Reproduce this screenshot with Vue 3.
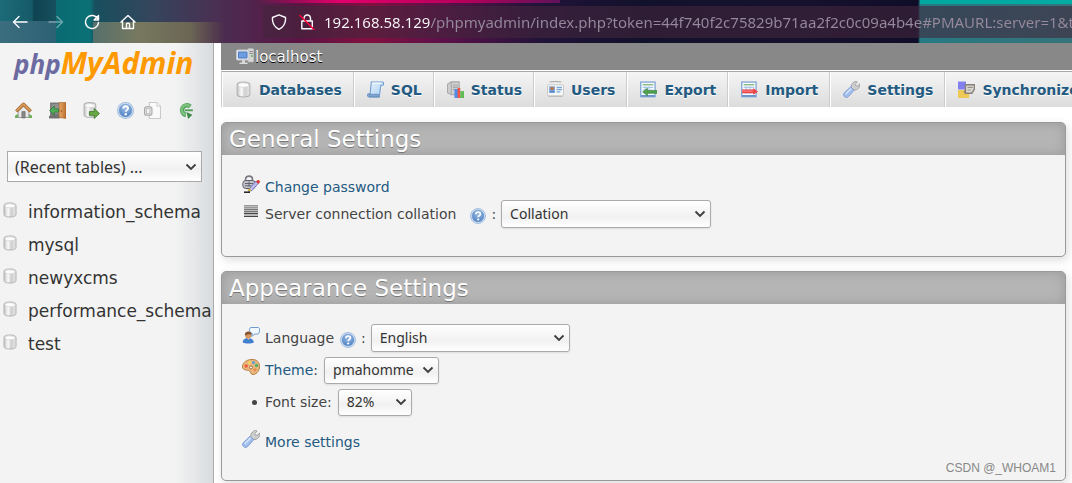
<script setup>
import { ref } from 'vue'

const address = ref('192.168.58.129/phpmyadmin/index.php?token=44f740f2c75829b71aa2f2c0c09a4b4e#PMAURL:server=1&target=main.php')

const shortcuts = [
  { icon: 'house', label: 'Home' },
  { icon: 'door', label: 'Log out' },
  { icon: 'query', label: 'Query window' },
  { icon: 'help', label: 'phpMyAdmin documentation' },
  { icon: 'docs', label: 'Documentation' },
  { icon: 'reload', label: 'Reload navigation frame' }
]

const databases = ['information_schema', 'mysql', 'newyxcms', 'performance_schema', 'test']

const tabs = [
  { icon: 'db', label: 'Databases' },
  { icon: 'sql', label: 'SQL' },
  { icon: 'status', label: 'Status' },
  { icon: 'users', label: 'Users' },
  { icon: 'export', label: 'Export' },
  { icon: 'import', label: 'Import' },
  { icon: 'wrench', label: 'Settings' },
  { icon: 'sync', label: 'Synchronize' }
]
</script>

<template>
  <svg class="sprite" aria-hidden="true">
    <defs>
      <linearGradient id="metal" x1="0" x2="1">
        <stop offset="0" stop-color="#c4c4c4" />
        <stop offset=".35" stop-color="#fafafa" />
        <stop offset=".6" stop-color="#cfcfcf" />
        <stop offset="1" stop-color="#e6e6e6" />
      </linearGradient>
      <radialGradient id="blueBall" cx=".5" cy=".3" r=".75">
        <stop offset="0" stop-color="#9dbfe8" />
        <stop offset="1" stop-color="#4a7dbd" />
      </radialGradient>
      <linearGradient id="paper" x1="0" y1="0" x2="1" y2="1">
        <stop offset="0" stop-color="#e9f4ff" />
        <stop offset="1" stop-color="#a9cdf0" />
      </linearGradient>
      <linearGradient id="wood" x1="0" x2="1">
        <stop offset="0" stop-color="#e5a868" />
        <stop offset="1" stop-color="#b9702f" />
      </linearGradient>

      <symbol id="db" viewBox="0 0 16 16">
        <path d="M2 3.5C2 1.8 4.5 1 8 1s6 .8 6 2.500v9c0 1.700-2.500 2.500-6 2.500s-6-.8-6-2.500z" fill="url(#metal)" stroke="#b2b2b2" />
        <ellipse cx="8" cy="3.800" rx="5" ry="2" fill="#fdfdfd" stroke="#d2d2d2" stroke-width=".6" />
      </symbol>
      <symbol id="house" viewBox="0 0 16 16">
        <path d="M0 15h16v-2l-2-1.500H2L0 13z" fill="#6db15b" />
        <path d="M3 7l5-5 5 5v7.500H3z" fill="#e8e8e8" stroke="#999" stroke-width=".8" />
        <path d="M6.500 9h3v6h-3z" fill="#888" stroke="#666" stroke-width=".6" />
        <path d="M1.200 8.800L8 2.200l6.800 6.600" fill="none" stroke="#9b6532" stroke-width="3.200" stroke-linejoin="round" />
        <path d="M1.500 8.300L8 2l6.500 6.300" fill="none" stroke="#dc9b57" stroke-width="1.800" stroke-linejoin="round" />
      </symbol>
      <symbol id="door" viewBox="0 0 16 16">
        <path d="M1 .5h10V15H1z" fill="#777" />
        <path d="M2.500 2h7v9h-7z" fill="#929292" />
        <path d="M0 13h10v2.500H0z" fill="#6f6f6f" />
        <path d="M9.500.5H16V15.500l-6.500-1z" fill="url(#wood)" stroke="#a56630" stroke-width=".6" />
        <path d="M11 8.500h1.200" stroke="#76420f" />
        <path d="M.5 8L5 3.800v2.700h4v3H5v2.700z" fill="#4eb055" stroke="#29743a" stroke-width=".7" />
      </symbol>
      <symbol id="query" viewBox="0 0 16 16">
        <path d="M1 3C1 1.500 3.500.6 6.500.6S12 1.500 12 3v9c0 1.500-2.500 2.400-5.500 2.400S1 13.500 1 12z" fill="url(#metal)" stroke="#b2b2b2" />
        <ellipse cx="6.500" cy="3.300" rx="4.500" ry="1.700" fill="#fff" stroke="#d4d4d4" stroke-width=".6" />
        <path d="M6 9h4.500V6l5 4.800-5 4.700v-3H6z" fill="#67a844" stroke="#3f7b28" stroke-width=".8" />
      </symbol>
      <symbol id="help" viewBox="0 0 16 16">
        <circle cx="8" cy="8" r="7.500" fill="#dbe6f4" stroke="#a3bee0" />
        <circle cx="8" cy="8" r="6" fill="url(#blueBall)" stroke="#6f9ace" stroke-width=".6" />
        <path d="M5.800 6.200C6 4.500 7 4 8.100 4c1.300 0 2.300.8 2.300 2 0 1.600-2.200 1.700-2.200 3.200" fill="none" stroke="#fff" stroke-width="1.700" />
        <circle cx="8.200" cy="11.500" r="1.100" fill="#fff" />
      </symbol>
      <symbol id="docs" viewBox="0 0 16 16">
        <path d="M5 .5h7l3.500 3.500v11.500H5z" fill="#fafafa" stroke="#cacaca" />
        <path d="M12 .5V4h3.500" fill="#eee" stroke="#cacaca" stroke-width=".7" />
        <rect x=".5" y="4.500" width="7" height="8" rx="2" fill="#ddd" stroke="#aaa" />
        <rect x="2.500" y="6" width="3" height="5" fill="#f2f2f2" stroke="#b5b5b5" stroke-width=".6" />
      </symbol>
      <symbol id="reload" viewBox="0 0 16 16">
        <path d="M11.500 4.300A4.600 4.600 0 1 0 7.500 12.200" fill="none" stroke="#4a9a54" stroke-width="4.200" />
        <path d="M11.300 4.200A4.600 4.600 0 1 0 7.500 12" fill="none" stroke="#79c07d" stroke-width="2.600" />
        <path d="M6.500 7.800h7.500" fill="none" stroke="#4e9e58" stroke-width="1.800" />
        <path d="M8 9.500l5.500 2.500L9.500 16z" fill="#3d8a49" />
      </symbol>
      <symbol id="host" viewBox="0 0 18 18">
        <path d="M12 1.500h5l.8 1V14l-1 1H12z" fill="#d6d6d6" stroke="#b3b3b3" stroke-width=".7" />
        <path d="M13 4.500h4M13 6.500h4" stroke="#8c8c8c" />
        <path d="M15 9h1.800" stroke="#54b54b" stroke-width="1.600" />
        <path d="M4 15.500h7l1 1.500H3zM6 13h3v3H6z" fill="#d9d9d9" />
        <rect x=".5" y="3" width="12.500" height="10" rx="1" fill="#e2e5ea" stroke="#c4c8ce" />
        <path d="M2.500 5h8.500v6H2.500z" fill="#6d9ce0" stroke="#4f7cc0" />
      </symbol>
      <symbol id="sql" viewBox="0 0 16 16">
        <path d="M4 1h10.500c1.300 0 1.500 3 .3 3H13L11.500 15H2C0 15 0 12 1.500 12H3z" fill="url(#paper)" stroke="#6f9cd0" />
        <path d="M1.500 12.500h9L11.500 15H2z" fill="#7fa4d0" stroke="#5c84b5" stroke-width=".7" />
        <path d="M5 2h8.500" stroke="#fff" />
      </symbol>
      <symbol id="status" viewBox="0 0 16 16">
        <path d="M.5 3L4 .8h7.500V13H4L.5 11z" fill="#cfcfcf" stroke="#a9a9a9" />
        <path d="M4 1v12M5.500 4h5M5.500 6h5M5.500 8h4" stroke="#a9a9a9" />
        <path d="M7 7.500h3.500V16H7z" fill="#538ce6" />
        <path d="M10 6.500h2.500V16H10z" fill="#f05443" />
        <path d="M12.500 9.500H16V16h-3.500z" fill="#63ba55" />
      </symbol>
      <symbol id="users" viewBox="0 0 16 16">
        <path d="M2.500 1C5 .3 11 .3 13.500 1" fill="none" stroke="#aaa" />
        <rect x=".5" y="3.500" width="15" height="10.500" rx="1" fill="#f7f7f7" stroke="#cbcbcb" />
        <path d="M2 5h5.500v6H2z" fill="#7da7dc" />
        <circle cx="4.800" cy="7" r="1.700" fill="#bf7640" />
        <path d="M2.300 11c0-3 5-3 5 0z" fill="#5d8fd0" />
        <path d="M9 6h5M9 8h5M9 10.200h3.500" stroke="#78a6d5" stroke-width="1.200" />
        <path d="M1.500 14.500h13" stroke="#bbb" />
      </symbol>
      <symbol id="sheet" viewBox="0 0 16 16">
        <rect x=".7" y="1" width="13.500" height="13.800" fill="#f9fcff" stroke="#7ca3d2" stroke-width="1.200" />
        <path d="M2.500 3.500h10" stroke="#87b77e" stroke-width="1.300" />
        <path d="M2.500 6h10M2.500 8.500h10M2.500 11h10M5 5v7M8.500 5v7" stroke="#aac7e5" />
        <path d="M1 14h13" stroke="#6a95ca" stroke-width="1.600" />
      </symbol>
      <symbol id="export" viewBox="0 0 16 16">
        <use href="#sheet" />
        <path d="M2.500 10.200L7 6.800v2.200h9v2.600H7v2.200z" fill="#4fa44c" stroke="#2f7435" stroke-width=".5" />
      </symbol>
      <symbol id="import" viewBox="0 0 16 16">
        <use href="#sheet" />
        <path d="M1 8h10.500V6.500L16 10l-4.500 3v-1.500H1z" fill="#ee4549" />
        <path d="M1 9.500h10" stroke="#ff9595" stroke-width=".8" />
      </symbol>
      <symbol id="wrench" viewBox="0 0 16 16">
        <path d="M8 6.800c-.8-2.800 1-6 4.200-6.400l1.200.6-2 2.200.7 1.500 2-.2L15.800 2.500c.7 3.200-2 6.300-5.500 6z" fill="#cfcfcf" stroke="#999" stroke-width=".8" />
        <path d="M7.200 5.500l3.200 3.200-5.300 6C2.800 17-.8 14 1 11.400z" fill="#a1bdec" stroke="#7b9bd0" stroke-width=".8" />
        <path d="M7.300 7.500L2.800 12" stroke="#d5e3fb" stroke-width="1.500" stroke-linecap="round" />
      </symbol>
      <symbol id="sync" viewBox="0 0 16 16">
        <path d="M0 .5h7.500v7.500H0z" fill="#8280ee" />
        <path d="M0 8.500h10.500V16H0z" fill="#efc955" />
        <path d="M7 3.500h8.500v4L13 11.500H7z" fill="#dcd8d2" stroke="#858078" stroke-width="1.300" />
        <path d="M9 6h5M9 8.500h3" stroke="#9a938a" />
        <path d="M5 10l2.500-2v4z" fill="#85796b" />
      </symbol>
      <symbol id="passwd" viewBox="0 0 18 18">
        <path d="M3.500 7V4.500c0-4.500 7-4.500 7 0V7" fill="none" stroke="#77777f" stroke-width="1.600" />
        <rect x=".8" y="5.500" width="12.500" height="8" rx="3" fill="#c3c3ce" stroke="#5e5e6a" />
        <path d="M3 8.500h8M3 10.800h6M7 6.500v5" stroke="#62626e" />
        <path d="M7.500 13.500L14 6l2.500 2.300-6.500 7.200-3.500 1z" fill="#b9b9ee" stroke="#6767a9" stroke-width=".8" />
        <path d="M5 14.500l3-.8L9.500 15l-2 1.500z" fill="#dfb832" />
        <path d="M2 17.200h6" stroke="#111" stroke-width="1.400" />
        <circle cx="16.200" cy="6.800" r="1.700" fill="#d8342c" />
      </symbol>
      <symbol id="lines" viewBox="0 0 18 18">
        <path d="M2 3h14v12H2z" fill="#bbb" />
        <path d="M2 3.500h14M2 5.500h14" stroke="#999" />
        <path d="M2 7.500h14M2 9.500h14" stroke="#777" />
        <path d="M2 11.500h14M2 14.500h14" stroke="#444" />
      </symbol>
      <symbol id="lang" viewBox="0 0 18 18">
        <path d="M9 1.500h7.500c1.500 0 1.500 6-.5 6.500h-3L9.500 10.500l.8-3C7 6.500 6.500 2 9 1.500z" fill="#f2f8ff" stroke="#6f9cd0" />
        <path d="M.8 16.500c-.5-6 11-6 11 0-3 1.400-8 1.400-11 0z" fill="#3f7fd2" />
        <circle cx="6.200" cy="9.500" r="3" fill="#d99862" />
        <path d="M2.800 9c0-5 7.500-4.500 6.900-.3C7.500 8.700 6 7.500 4.500 9.500z" fill="#86532d" />
        <path d="M5 12l1.500 2L8 12" fill="#eaba91" />
      </symbol>
      <symbol id="palette" viewBox="0 0 18 18">
        <path d="M9 1.500c5.500-.5 8.800 2.500 8.500 7.500-.3 5-4 7.500-6.500 7.500-3 0-1.500-3-4.500-4C3.500 12-.2 11.500.5 8 1.200 4 5 1.800 9 1.500z" fill="#e9b77e" stroke="#b98247" />
        <circle cx="4.200" cy="8" r="1.700" fill="#ee5a3f" />
        <circle cx="7.500" cy="4.500" r="1.500" fill="#f6da55" />
        <circle cx="11.500" cy="4.500" r="1.600" fill="#5e9de0" />
        <circle cx="14.500" cy="7.500" r="1.700" fill="#4eb26a" />
        <circle cx="9" cy="9.500" r="1.500" fill="#f3f2f2" stroke="#a8723a" />
        <circle cx="13" cy="11.800" r="1.500" fill="#e8894d" />
      </symbol>
      <symbol id="chevron" viewBox="0 0 12 8">
        <path d="M1.500 1.500L6 6l4.500-4.500" fill="none" stroke="#3c3c3c" stroke-width="1.800" />
      </symbol>
    </defs>
  </svg>

  <header class="browser">
    <div class="nav-buttons">
      <button type="button" aria-label="Back">
        <svg viewBox="0 0 16 16"><path d="M15 8H1.500M7 2.500L1.500 8 7 13.500" /></svg>
      </button>
      <button type="button" aria-label="Forward" disabled>
        <svg viewBox="0 0 16 16"><path d="M1 8h13.500M9 2.500L14.500 8 9 13.500" /></svg>
      </button>
      <button type="button" aria-label="Reload">
        <svg viewBox="0 0 16 16"><path d="M13.800 5A6.500 6.500 0 1 0 14.500 8.500M14.500 1.500V6H10z" /></svg>
      </button>
      <button type="button" aria-label="Home page">
        <svg viewBox="0 0 16 16"><path d="M1 8l7-6.500L15 8M2.500 7v7.500h11V7M6.500 14.500V10c0-1 3-1 3 0v4.500" /></svg>
      </button>
    </div>
    <div class="address">
      <svg class="shield" viewBox="0 0 16 16"><path d="M8 .8L14.500 3.500C15 9 12.500 13 8 15.300 3.500 13 1 9 1.500 3.500z" /></svg>
      <svg class="lock" viewBox="0 0 16 16"><path d="M5 7V4.500c0-5 6.500-4.500 6.500 0V7M2.800 7h10.500v7.800H2.800z" /><path class="strike" d="M1 1.500L15 15.500" /></svg>
      <input v-model="address" type="text" aria-label="Address" spellcheck="false">
    </div>
  </header>

  <div class="page">
    <aside class="sidebar">
      <a class="logo" href="#home"><span class="php">php</span><span class="admin">MyAdmin</span></a>
      <nav class="shortcuts" aria-label="Shortcuts">
        <a v-for="item in shortcuts" :key="item.icon" :class="item.icon" href="#shortcut" :aria-label="item.label">
          <svg><use :href="'#' + item.icon" /></svg>
        </a>
      </nav>
      <div class="select recent">
        <select aria-label="Recent tables"><option>(Recent tables) ...</option></select>
        <svg class="chevron"><use href="#chevron" /></svg>
      </div>
      <ul class="databases">
        <li v-for="name in databases" :key="name">
          <svg><use href="#db" /></svg><a href="#database">{{ name }}</a>
        </li>
      </ul>
    </aside>

    <main class="content">
      <div class="server">
        <svg><use href="#host" /></svg><a href="#server">localhost</a>
      </div>
      <nav class="tabs" aria-label="Server">
        <a v-for="tab in tabs" :key="tab.icon" href="#tab">
          <svg><use :href="'#' + tab.icon" /></svg>{{ tab.label }}
        </a>
      </nav>

      <section class="group">
        <h2>General Settings</h2>
        <ul class="general">
          <li>
            <svg class="mark"><use href="#passwd" /></svg>
            <a href="#password">Change password</a>
          </li>
          <li>
            <svg class="mark"><use href="#lines" /></svg>
            <label for="collation">Server connection collation</label>
            <a class="hint wide" href="#help" aria-label="Collation help"><svg><use href="#help" /></svg></a>
            <span class="colon">:</span>
            <div class="select collation">
              <select id="collation"><option>Collation</option></select>
              <svg class="chevron"><use href="#chevron" /></svg>
            </div>
          </li>
        </ul>
      </section>

      <section class="group">
        <h2>Appearance Settings</h2>
        <ul class="appearance">
          <li>
            <svg class="mark"><use href="#lang" /></svg>
            <label for="language">Language</label>
            <a class="hint" href="#help" aria-label="Language help"><svg><use href="#help" /></svg></a>
            <span class="colon">:</span>
            <div class="select language">
              <select id="language"><option>English</option></select>
              <svg class="chevron"><use href="#chevron" /></svg>
            </div>
          </li>
          <li>
            <svg class="mark"><use href="#palette" /></svg>
            <label for="theme"><a href="#theme">Theme</a>:</label>
            <div class="select theme">
              <select id="theme"><option>pmahomme</option></select>
              <svg class="chevron"><use href="#chevron" /></svg>
            </div>
          </li>
          <li>
            <span class="bullet"></span>
            <label for="fontsize">Font size:</label>
            <div class="select fontsize">
              <select id="fontsize"><option>82%</option></select>
              <svg class="chevron"><use href="#chevron" /></svg>
            </div>
          </li>
          <li class="more">
            <svg class="mark"><use href="#wrench" /></svg>
            <a href="#more">More settings</a>
          </li>
        </ul>
      </section>
    </main>
    <div class="credit">CSDN @_WHOAM1</div>
  </div>
</template>

<style>
html {
  overflow: hidden;
}
body {
  background: #fff;
}
#app {
  display: flex;
  flex-direction: column;
  min-height: 100vh;
}
</style>

<style scoped>
* {
  box-sizing: border-box;
}
a {
  color: #235a81;
  text-decoration: none;
}
ul {
  list-style: none;
  margin: 0;
  padding: 0;
}
svg {
  display: block;
  flex: none;
}
.sprite {
  position: absolute;
  width: 0;
  height: 0;
}

/* browser toolbar */
.browser {
  display: flex;
  align-items: center;
  height: 43px;
  flex: none;
  background:
    linear-gradient(90deg, #1b6b78, #175a69 32px, #0f4351 34px, #17505e) 0 0 / 56px 21px no-repeat,
    linear-gradient(90deg, #3b6f7f, #2c6073) 0 21px / 56px 22px no-repeat,
    linear-gradient(90deg, #56706c, #77795f 35%, #6a6554 75%, #4d2f4d) 93px 22px / 130px 21px no-repeat,
    linear-gradient(90deg, transparent 20%, #e0006c 42%, #b5005a 75%, #60135a) 180px 0 / 380px 3px no-repeat,
    linear-gradient(90deg, #00a8a0, #20c0b4) 920px 0 / 100% 4px no-repeat,
    linear-gradient(90deg, #08646b 0, #0b7076 90px, #174f5e 95px, #34465c 150px, #4b2e52 220px, #5b1444 300px, #82103f 370px, #5d1149 440px, #211339 540px, #12112b 640px, #16122e 800px, #100d28 918px, #267a83 920px, #36737a);
}
.nav-buttons {
  display: flex;
  gap: 20px;
  padding-left: 12px;
}
.nav-buttons button {
  padding: 0;
  border: 0;
  background: none;
}
.nav-buttons button:disabled {
  opacity: .4;
}
.browser svg {
  width: 16px;
  height: 16px;
  fill: none;
  stroke: #fbfbfe;
  stroke-width: 1.400;
  stroke-linejoin: round;
  stroke-linecap: round;
}
.browser .strike {
  stroke: #ff0039;
}
.address {
  display: flex;
  align-items: center;
  gap: 12px;
  flex: 1;
  min-width: 0;
  height: 32px;
  margin-left: 127px;
  padding-left: 8px;
  border-radius: 4px 0 0 4px;
  background: rgba(66, 38, 60, .6);
}
.address input {
  flex: 1;
  min-width: 0;
  padding: 0;
  margin-left: -3px;
  border: 0;
  outline: 0;
  font: 15px/22px "Noto Sans", sans-serif;
  color: transparent;
  background: linear-gradient(90deg, #fbfbfe 106px, #95899b 106px);
  -webkit-background-clip: text;
  background-clip: text;
}

.page {
  display: flex;
  flex: 1;
  position: relative;
  font: 14px/20px "DejaVu Sans", sans-serif;
  color: #444;
}

/* navigation frame */
.sidebar {
  width: 214px;
  flex: none;
  overflow: hidden;
  border-right: 1px solid #aaa;
  background: linear-gradient(90deg, transparent 175px, #d8dcdf) #f3f3f3;
}
.logo {
  display: block;
  padding: 2px 0 0 14px;
  line-height: 36px;
  white-space: nowrap;
  font-family: "Open Sans", sans-serif;
  font-style: italic;
  font-weight: 700;
  font-size: 30px;
}
.php {
  color: #6c6ba1;
  font-size: 26px;
}
.admin {
  color: #f90;
}
.shortcuts {
  display: flex;
  gap: 17px;
  padding: 20px 0 0 15px;
}
.shortcuts svg {
  width: 17px;
  height: 17px;
}
.shortcuts .docs {
  margin-left: -7px;
}
.select {
  display: grid;
  align-items: center;
  flex: none;
}
.select select,
.select .chevron {
  grid-area: 1 / 1;
}
.select .chevron {
  justify-self: end;
  width: 12px;
  height: 8px;
  margin-right: 5px;
  pointer-events: none;
}
.select select {
  appearance: none;
  width: 100%;
  height: 28px;
  padding: 0 8px;
  border: 1px solid #aaa;
  border-radius: 3px;
  box-shadow: 0 1px 2px #ddd;
  background: linear-gradient(#fff, #f1f1f1 60%, #fff);
  color: #333;
  font: 14px/20px "Noto Sans", sans-serif;
}
.recent {
  margin: 32px 11px 0 7px;
}
.recent select {
  height: 31px;
  padding: 0 7px;
  border-radius: 0;
  box-shadow: none;
  font-size: 16px;
}
.databases {
  padding: 13px 0 0 2px;
}
.databases li {
  display: flex;
  align-items: center;
  gap: 10px;
  height: 33px;
  font-size: 17px;
}
.databases svg {
  width: 16px;
  height: 16px;
  margin-bottom: 3px;
}
.databases a {
  color: #333;
}

/* main frame */
.content {
  flex: 1;
  min-width: 0;
  padding-left: 7px;
}
.server {
  display: flex;
  align-items: center;
  height: 27px;
  padding-left: 15px;
  background: #888;
  font-size: 15px;
}
.server svg {
  width: 18px;
  height: 18px;
  margin: 0 1px 2px 0;
}
.server a {
  color: #fff;
  text-shadow: 0 1px 0 #000;
}
.tabs {
  display: flex;
  height: 36px;
  margin-top: 1px;
  overflow: hidden;
  border-top: 1px solid #aaa;
  border-left: 1px solid #ccc;
  background: linear-gradient(#f5f5f5, #dcdcdc);
}
.tabs a {
  display: flex;
  align-items: center;
  flex: none;
  gap: 7px;
  padding: 0 11px 0 12px;
  border-right: 1px solid #ccc;
  border-left: 1px solid #fff;
  font-weight: 700;
  text-shadow: 0 1px 0 #fff;
}
.tabs svg {
  width: 17px;
  height: 17px;
}
.group {
  margin: 14px 6px 0 0;
  border: 1px solid #999;
  border-radius: 5px;
  background: #f3f3f3;
  box-shadow: 2px 3px 10px #ddd;
}
.tabs + .group {
  margin-top: 15px;
}
.group h2 {
  margin: 0;
  padding-left: 7px;
  border-radius: 4px 4px 0 0;
  background: #b5b5b5;
  box-shadow: inset 0 0 12px #999;
  color: #fff;
  font-size: 23px;
  font-weight: 400;
  line-height: 32px;
  text-shadow: 0 1px 0 #777;
}
.group li {
  display: flex;
  align-items: center;
}
.mark {
  width: 18px;
  height: 18px;
  margin: 0 5px 6px 0;
}
.general {
  padding: 18px 0 28px 20px;
}
.general li {
  min-height: 27px;
}
.appearance {
  padding: 18px 0 21px 20px;
}
.appearance li {
  min-height: 32px;
}
.appearance .more {
  margin-top: 7px;
  height: 34px;
}
.appearance .theme select,
.appearance .fontsize select {
  height: 27px;
}
.hint {
  margin: 3px 5px 0 6px;
}
.hint.wide {
  margin-left: 14px;
}
.hint svg {
  width: 16px;
  height: 16px;
}
.colon {
  margin-right: 5px;
}
.collation {
  width: 210px;
}
.language {
  width: 199px;
}
.theme {
  width: 115px;
  margin-left: 6px;
}
.fontsize {
  width: 74px;
  margin-left: 6px;
}
.bullet {
  width: 5px;
  height: 5px;
  margin: 0 8px 0 10px;
  border-radius: 50%;
  background: #444;
}
.credit {
  position: absolute;
  right: 16px;
  bottom: 6px;
  color: #888;
  font: 12px/18px "Liberation Sans", sans-serif;
}
</style>
